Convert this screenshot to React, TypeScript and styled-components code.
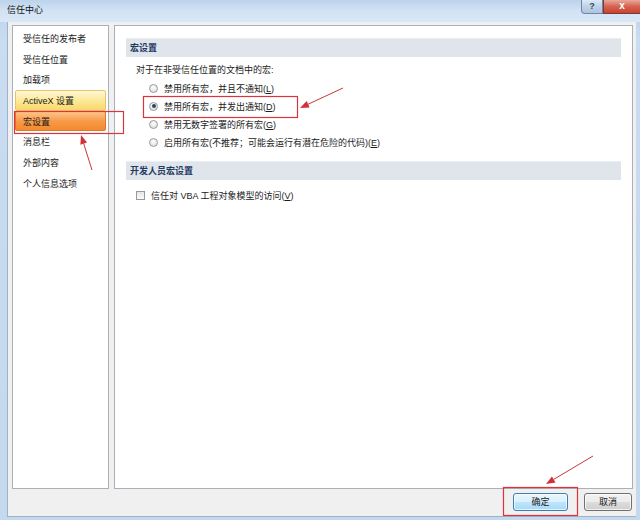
import styled, { createGlobalStyle } from "styled-components";

const GlobalStyle = createGlobalStyle`
  html, body {
    margin: 0;
    padding: 0;
    overflow: hidden;
    background: #ffffff;
  }

  * {
    box-sizing: border-box;
  }
`;

const Window = styled.div`
  position: relative;
  display: flex;
  flex-direction: column;
  width: 640px;
  height: 520px;
  background: linear-gradient(180deg, #b9d1ea 0%, #c9dcf1 40px, #c4d8ee 100%);
  font-family: "Liberation Sans", "Noto Sans CJK SC", sans-serif;
  font-size: 9px;
  color: #1b1b1b;
`;

const TitleBar = styled.div`
  display: flex;
  align-items: flex-start;
  justify-content: space-between;
  height: 22px;
  padding-left: 7px;
  background: linear-gradient(180deg, #bcd3eb 0%, #d2e3f4 50%, #dae8f6 100%);
`;

const Title = styled.span`
  line-height: 20px;
  color: #111;
`;

const Controls = styled.div`
  display: flex;
`;

const HelpButton = styled.div`
  width: 22px;
  height: 14px;
  border: 1px solid #6f87a3;
  border-top: none;
  border-radius: 0 0 0 4px;
  background: linear-gradient(180deg, #dde9f6, #bcd0e6 55%, #aec6e0);
  color: #34495e;
  font-size: 9px;
  font-weight: bold;
  line-height: 13px;
  text-align: center;
`;

const CloseButton = styled.div`
  width: 37px;
  height: 14px;
  border: 1px solid #7a3a35;
  border-top: none;
  border-right: none;
  background: linear-gradient(180deg, #e9a99c, #d6624f 50%, #c8432f);
  color: #fff;
  font-size: 10px;
  font-weight: bold;
  line-height: 12px;
  text-align: center;
`;

const Body = styled.div`
  display: flex;
  flex-direction: column;
  flex: 1;
  margin: 0 4px 3px 7px;
  padding: 3px 3px 0 4px;
  background: #f0f0f0;
  border-left: 1px solid #9fb3c8;
  border-bottom: 1px solid #9fb3c8;
`;

const Panels = styled.div`
  display: flex;
  gap: 5px;
  height: 464px;
`;

const Nav = styled.div`
  display: flex;
  flex-direction: column;
  width: 97px;
  padding: 2px 2px;
  background: #fff;
  border: 1px solid #a9b0b8;
`;

const NavItem = styled.div<{ $state?: "hover" | "active" }>`
  height: 20.7px;
  padding-left: 7px;
  line-height: 20px;
  border: 1px solid transparent;
  border-radius: 2px;
  color: #1b1b1b;
  ${({ $state }) =>
    $state === "hover" &&
    `
    background: linear-gradient(180deg, #fff8d6 0%, #fde99a 50%, #f9d86b 100%);
    border-color: #e6c566;
  `}
  ${({ $state }) =>
    $state === "active" &&
    `
    background: linear-gradient(180deg, #fcc58c 0%, #f89a4a 50%, #f38a2c 100%);
    border-color: #d9782f;
  `}
`;

const Content = styled.div`
  flex: 1;
  padding: 12px 11px 0 11px;
  background: #fff;
  border: 1px solid #a9b0b8;
`;

const SectionHeader = styled.div<{ $gap?: number }>`
  height: 19px;
  margin-top: ${({ $gap }) => $gap ?? 0}px;
  padding-left: 4px;
  line-height: 19px;
  background: #dfe5eb;
  border-top: 1px solid #e9eef2;
  color: #1f3b64;
  font-weight: bold;
`;

const Intro = styled.div`
  margin-top: 4px;
  padding-left: 10px;
  line-height: 18px;
`;

const OptionRow = styled.div`
  display: flex;
  align-items: center;
  gap: 6px;
  height: 18px;
  padding-left: 23px;
`;

const Radio = styled.span<{ $checked?: boolean }>`
  display: flex;
  align-items: center;
  justify-content: center;
  width: 9px;
  height: 9px;
  border: 1px solid #9a9a9a;
  border-radius: 50%;
  background: radial-gradient(circle at 50% 35%, #ffffff, #d7d7d7);

  &::after {
    content: "";
    display: ${({ $checked }) => ($checked ? "block" : "none")};
    width: 4px;
    height: 4px;
    border-radius: 50%;
    background: #23466e;
  }
`;

const CheckRow = styled.div`
  display: flex;
  align-items: center;
  gap: 6px;
  height: 18px;
  margin-top: 6px;
  padding-left: 10px;
`;

const Checkbox = styled.span`
  width: 9px;
  height: 9px;
  border: 1px solid #9a9a9a;
  background: linear-gradient(180deg, #e6e6e6, #fafafa);
`;

const Footer = styled.div`
  display: flex;
  justify-content: flex-end;
  gap: 16px;
  padding: 4px 1px 0 0;
`;

const Button = styled.div<{ $default?: boolean }>`
  width: ${({ $default }) => ($default ? 55 : 48)}px;
  height: 18px;
  line-height: 16px;
  text-align: center;
  border: 1px solid ${({ $default }) => ($default ? "#3c7fb1" : "#707070")};
  border-radius: 3px;
  background: ${({ $default }) =>
    $default
      ? "linear-gradient(180deg, #eaf6fd 0%, #d9f0fc 50%, #bee6fd 51%, #a7d9f5 100%)"
      : "linear-gradient(180deg, #f2f2f2 0%, #ebebeb 50%, #dddddd 51%, #cfcfcf 100%)"};
  box-shadow: inset 0 0 0 1px rgba(255, 255, 255, 0.7);
  color: #1b1b1b;
`;

const Overlay = styled.svg`
  position: absolute;
  left: 0;
  top: 0;
  pointer-events: none;
`;

const Marker = styled.rect`
  fill: none;
  stroke: #e0323c;
  stroke-width: 1.2px;
`;

function Mnemonic({ k }: { k: string }) {
  return (
    <>
      (<u>{k}</u>)
    </>
  );
}

const navItems = [
  "受信任的发布者",
  "受信任位置",
  "加载项",
  "ActiveX 设置",
  "宏设置",
  "消息栏",
  "外部内容",
  "个人信息选项",
];

const macroOptions = [
  { label: "禁用所有宏，并且不通知", key: "L" },
  { label: "禁用所有宏，并发出通知", key: "D", checked: true },
  { label: "禁用无数字签署的所有宏", key: "G" },
  { label: "启用所有宏(不推荐；可能会运行有潜在危险的代码)", key: "E" },
];

function Arrow({ x1, y1, x2, y2 }: { x1: number; y1: number; x2: number; y2: number }) {
  const a = Math.atan2(y2 - y1, x2 - x1);
  const len = 9;
  const w = 3.5;
  const bx = x2 - len * Math.cos(a);
  const by = y2 - len * Math.sin(a);
  const px = -Math.sin(a) * w;
  const py = Math.cos(a) * w;
  return (
    <g>
      <line x1={x1} y1={y1} x2={bx} y2={by} stroke="#c8373a" strokeWidth={1} />
      <polygon
        points={`${x2},${y2} ${bx + px},${by + py} ${bx - px},${by - py}`}
        fill="#d0303a"
      />
    </g>
  );
}

export default function App() {
  return (
    <>
      <GlobalStyle />
      <Window>
        <TitleBar>
          <Title>信任中心</Title>
          <Controls>
            <HelpButton>?</HelpButton>
            <CloseButton>x</CloseButton>
          </Controls>
        </TitleBar>
        <Body>
          <Panels>
            <Nav>
              {navItems.map((item) => (
                <NavItem
                  key={item}
                  $state={
                    item === "ActiveX 设置"
                      ? "hover"
                      : item === "宏设置"
                        ? "active"
                        : undefined
                  }
                >
                  {item}
                </NavItem>
              ))}
            </Nav>
            <Content>
              <SectionHeader>宏设置</SectionHeader>
              <Intro>对于在非受信任位置的文档中的宏:</Intro>
              {macroOptions.map((opt) => (
                <OptionRow key={opt.key}>
                  <Radio $checked={opt.checked} />
                  <span>
                    {opt.label}
                    <Mnemonic k={opt.key} />
                  </span>
                </OptionRow>
              ))}
              <SectionHeader $gap={10}>开发人员宏设置</SectionHeader>
              <CheckRow>
                <Checkbox />
                <span>
                  信任对 VBA 工程对象模型的访问
                  <Mnemonic k="V" />
                </span>
              </CheckRow>
            </Content>
          </Panels>
          <Footer>
            <Button $default>确定</Button>
            <Button>取消</Button>
          </Footer>
        </Body>
        <Overlay width={640} height={520} viewBox="0 0 640 520">
          <Marker x={14.5} y={111.5} width={109} height={22} />
          <Marker x={143.5} y={96.5} width={154} height={21} />
          <Marker x={503.5} y={487.5} width={74} height={28} />
          <Arrow x1={92} y1={170} x2={81} y2={135} />
          <Arrow x1={343} y1={88} x2={300} y2={108} />
          <Arrow x1={593} y1={456} x2={546} y2={484} />
        </Overlay>
      </Window>
    </>
  );
}
